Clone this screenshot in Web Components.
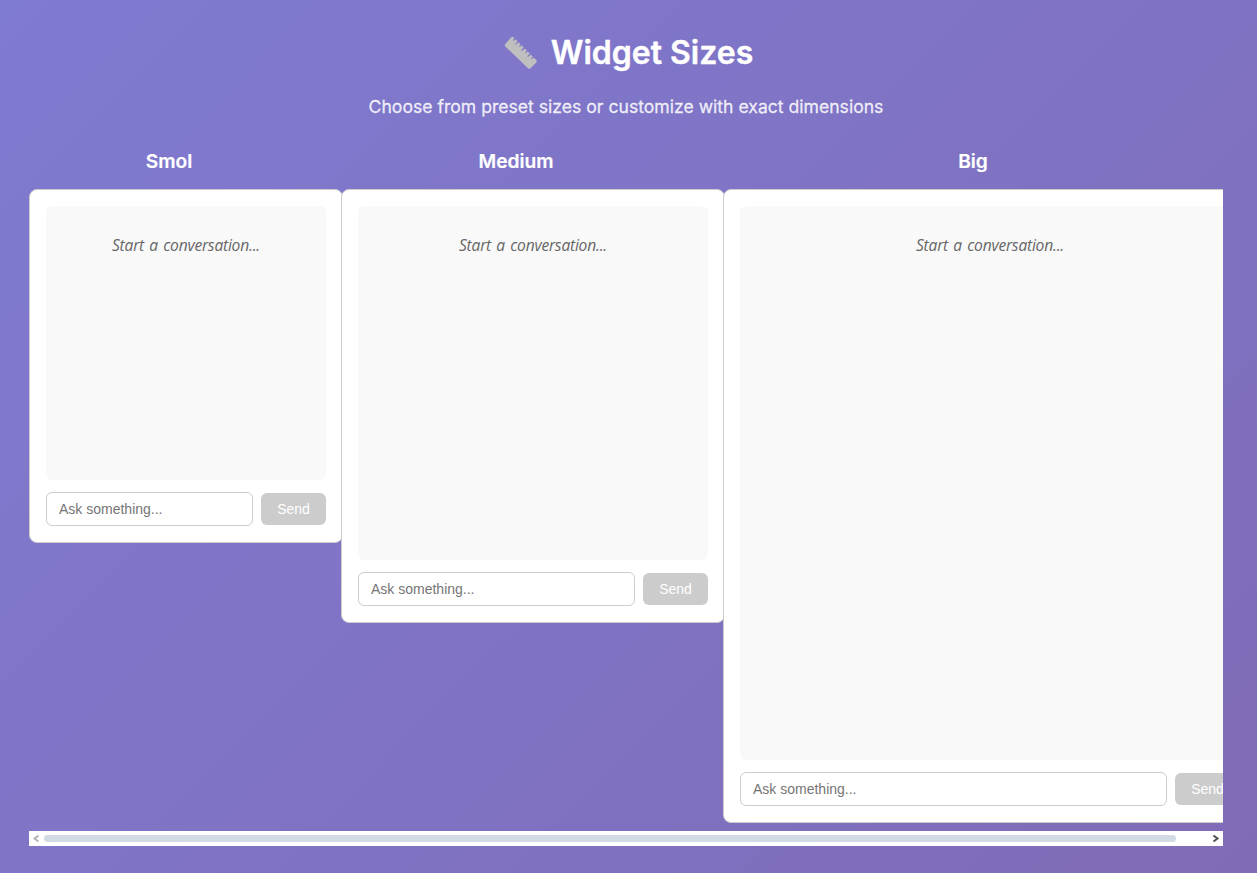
<!DOCTYPE html>
<html lang="en">
<head>
<meta charset="utf-8">
<title>Widget Sizes</title>
<style>
html,body{margin:0;height:100%}
body{overflow:hidden;font-family:Inter,sans-serif;background:linear-gradient(135deg,#7f7bd1 0%,#806bb7 100%)}
</style>
</head>
<body>
<sizes-page>
  <size-column label="Smol" style="--w:280px;--h:320px"></size-column>
  <size-column label="Medium" style="--w:350px;--h:400px"></size-column>
  <size-column label="Big" style="--w:500px;--h:600px"></size-column>
</sizes-page>
<script>
const shadow = (el, html) => { el.attachShadow({mode:'open'}).innerHTML = html; };

customElements.define('ruler-icon', class extends HTMLElement {
  constructor(){ super(); shadow(this, `
<style>:host{display:block;width:34px;height:34px}svg{display:block}</style>
<svg width="34" height="34" viewBox="0 0 34 34"><path fill="#bfbfbf" d="M1.2 8.2 7.2 1.3Q8.4.2 9.5 1.3L10.4 2.2 8.8 4.1 9.6 4.9 11.4 3.2 13.6 5.4 11.1 8 11.9 8.8 14.5 6.3 16.6 8.4 15 10.2 15.8 11 17.5 9.3 19.7 11.5 17.2 14.1 18 14.9 20.6 12.4 22.8 14.6 21.1 16.4 21.9 17.2 23.7 15.5 25.8 17.6 23.3 20.2 24.1 21 26.7 18.5 28.9 20.7 27.2 22.5 28 23.3 29.8 21.6 32.3 24.1Q33.4 25.3 32.3 26.4L26.6 32.2Q25.2 33.4 24 32.2L1.2 10.4Q.2 9.3 1.2 8.2Z"/></svg>`); }
});

customElements.define('chat-widget', class extends HTMLElement {
  constructor(){ super(); shadow(this, `
<style>
:host{display:flex;flex-direction:column;gap:12px;box-sizing:border-box;width:calc(var(--w) + 34px);height:calc(var(--h) + 34px);padding:16px;border:1px solid #ccc;border-radius:8px;background:#fff}
.log{flex:1;min-height:0;border-radius:6px;background:#f9f9f9;box-sizing:border-box;padding-top:28px;text-align:center;font:italic 15.6px/22px "Open Sans",sans-serif;word-spacing:1.5px;letter-spacing:-.22px;color:#666}
.row{display:flex;gap:8px;align-items:center}
input,button{font:14px "Liberation Sans",Arial,sans-serif;margin:0;box-sizing:border-box;border-radius:6px}
input{flex:1;min-width:0;height:34px;padding:8px 12px;border:1px solid #ccc;background:#fff}
input::placeholder{color:#757575}
button{width:65px;height:32px;padding:0;border:0;background:#ccc;color:#fff}
</style>
<div class="log">Start a conversation...</div>
<div class="row"><input placeholder="Ask something..."><button>Send</button></div>`); }
});

customElements.define('size-column', class extends HTMLElement {
  constructor(){ super(); shadow(this, `
<style>
:host{display:block;flex:none;width:var(--w)}
h3{margin:0 0 16px;text-align:center;font-size:19.2px;line-height:24px;font-weight:600;color:#fff;-webkit-text-stroke:.2px #fff}
</style>
<h3></h3><chat-widget></chat-widget>`); }
  connectedCallback(){ this.shadowRoot.querySelector('h3').textContent = this.getAttribute('label'); }
});

customElements.define('scroll-track', class extends HTMLElement {
  constructor(){ super(); shadow(this, `
<style>
:host{display:flex;align-items:center;height:15px;background:#fff}
svg{display:block;flex:none}
.lane{flex:1}
.thumb{width:1132px;height:7px;border-radius:4px;background:#d2dae4}
</style>
<svg width="15" height="15" viewBox="0 0 15 15" fill="none" stroke="#b5b5b5" stroke-width="2"><path d="M9.5 4.5 5.5 7.5 9.5 10.5"/></svg>
<div class="lane"><div class="thumb"></div></div>
<svg width="15" height="15" viewBox="0 0 15 15" fill="none" stroke="#505050" stroke-width="2"><path d="M5.5 4.5 9.5 7.5 5.5 10.5"/></svg>`); }
});

customElements.define('sizes-page', class extends HTMLElement {
  constructor(){ super(); shadow(this, `
<style>
:host{display:block;box-sizing:border-box;height:873px;padding:32px 34px 0 29px}
header{display:flex;flex-direction:column;align-items:center}
h1{display:flex;align-items:center;gap:13px;margin:0;height:41px;padding-left:5px;font-size:32px;line-height:41px;font-weight:600;color:#fff;-webkit-text-stroke:.4px #fff}
p{margin:21px 0 0;font-size:17.6px;line-height:26px;color:rgba(255,255,255,.85);-webkit-text-stroke:.3px rgba(255,255,255,.85)}
.strip{display:flex;gap:32px;align-items:flex-start;margin-top:29px;height:682px;overflow:hidden}
</style>
<header><h1><ruler-icon></ruler-icon><span>Widget Sizes</span></h1>
<p>Choose from preset sizes or customize with exact dimensions</p></header>
<div class="strip"><slot></slot></div>
<scroll-track></scroll-track>`); }
});
</script>
</body>
</html>
